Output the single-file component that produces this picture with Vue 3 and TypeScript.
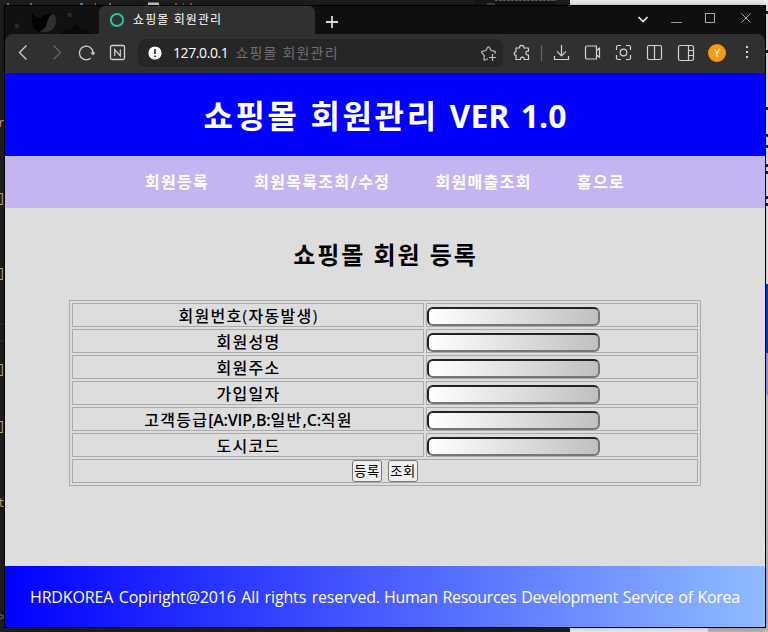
<script setup lang="ts">
import { ref } from 'vue'

interface Field { id: string; label: string }
interface Glyph { ch: string; y: number; color: string }
interface Part { text: string; latin: boolean }

const menu: string[] = ['회원등록', '회원목록조회/수정', '회원매출조회', '홈으로']
const fields: Field[] = [
  { id: 'custno', label: '회원번호(자동발생)' },
  { id: 'custname', label: '회원성명' },
  { id: 'address', label: '회원주소' },
  { id: 'joindate', label: '가입일자' },
  { id: 'grade', label: '고객등급[A:VIP,B:일반,C:직원' },
  { id: 'city', label: '도시코드' },
]
const values = ref<Record<string, string>>({})

// Latin runs are set tighter and heavier than the Hangul around them.
function parts(label: string): Part[] {
  if (!/[A-Z]/.test(label)) return [{ text: label, latin: false }]
  return (label.match(/[가-힣]+|[^가-힣]+/g) ?? []).map(text => ({ text, latin: !/[가-힣]/.test(text) }))
}

const code: Glyph[] = [
  { ch: 'r', y: 115, color: '#c9a37a' },
  { ch: ']', y: 190, color: '#c4b189' },
  { ch: ']', y: 265, color: '#c4b189' },
  { ch: ']', y: 361, color: '#c4b189' },
  { ch: ']', y: 418, color: '#c4b189' },
  { ch: 't', y: 495, color: '#d09a62' },
  { ch: '>', y: 609, color: '#6d7478' },
]
const marks: number[] = [11, 50, 107, 134, 145, 164, 171, 196, 203]
</script>

<template>
  <div class="desktop">
    <div class="backdrop">
      <div class="editor"></div>
      <div class="paper"></div>
      <div class="behind-blue"></div>
      <div class="behind-violet"></div>
      <div class="behind-gray"></div>
      <span v-for="g in code" :key="g.y" class="code" :style="{ top: g.y + 'px', color: g.color }">{{ g.ch }}</span>
      <i v-for="m in marks" :key="m" class="mark" :style="{ top: m + 'px' }"></i>
      <svg class="specks" width="570" height="5" viewBox="0 0 570 5">
        <path d="M7 4h2M30 4h2M109 4h2" stroke="#4d86a8" stroke-width="2" />
        <path d="M80 4h3M95 4h1" stroke="#4d86c8" stroke-width="2" />
        <path d="M148 4h11" stroke="#d0d0d0" stroke-width="3" />
        <path d="M175 4h2M183 4h1M190 4h2" stroke="#a5503c" stroke-width="2" />
        <path d="M475 0h81v5h-81z" fill="#171717" />
        <path d="M495 .5h61" stroke="#5a6158" stroke-dasharray="3 1" />
        <path d="M487 4h8" stroke="#34495a" stroke-width="2" />
      </svg>
    </div>

    <div class="window">
      <div class="tabs">
        <svg class="theme-art" width="94" height="28" viewBox="0 0 94 28">
          <rect width="94" height="28" fill="#111" />
          <path d="M27 7q3 5 9 5q4-4 12-4q-4 4-5 9q-2 8-9 9q-6-2-6-8q-2-3-1-11z" fill="#020202" />
          <path d="M48 8q4 2 3 9q-2 7-8 9q-5 1-8-1q6-2 7-8q1-7 6-9z" fill="#2f2f2f" />
          <circle cx="64.700" cy="9" r="2.200" fill="#2b2b2b" />
          <circle cx="11.700" cy="20" r="2.200" fill="#2b2b2b" />
          <path d="M55 28l6-5 3 1 7-6 7 6 3-1 5 5z" fill="#090909" />
        </svg>
        <div class="tab">
          <svg width="16" height="16" viewBox="0 0 16 16"><circle cx="8" cy="8" r="6.100" fill="none" stroke="#20c9a6" stroke-width="2" /></svg>
          <span>쇼핑몰 회원관리</span>
        </div>
        <svg class="plus" width="12" height="12" viewBox="0 0 12 12"><path d="M6 0v12M0 6h12" stroke="#d8d8d8" stroke-width="1.800" /></svg>
        <svg class="controls" width="122" height="16" viewBox="0 0 122 16" fill="none">
          <path d="M6.500 7l4.500 4.500L15.500 7" stroke="#e6e6e6" stroke-width="1.700" />
          <path d="M39 12.500h11" stroke="#999" />
          <rect x="73.500" y="3.500" width="9" height="9" stroke="#aaa" />
          <path d="M109.500 3.500l9 9M118.500 3.500l-9 9" stroke="#aaa" />
        </svg>
      </div>

      <div class="toolbar">
        <svg class="nav-icons" width="133" height="28" viewBox="0 0 133 28" fill="none" stroke="#d3d3d3" stroke-width="1.300">
          <path d="M21.500 6.500L14.500 13.500l7 7" />
          <path d="M48.500 6.500l7 7-7 7" stroke="#666" />
          <path d="M85.600 19.200A6.800 6.800 0 1 1 88 13.800" />
          <path d="M85.300 13.500h5.200l-2.500 2.800z" fill="#d3d3d3" stroke="none" />
          <rect x="105.500" y="6.500" width="14" height="14" rx="1.500" />
          <path d="M109.700 17v-6.500l5.600 6.500v-6.500" stroke-width="1.200" />
        </svg>
        <div class="address">
          <svg width="14" height="14" viewBox="0 0 14 14"><circle cx="7" cy="7" r="6.600" fill="#fff" /><path d="M7 3v5M7 9.500v1.600" stroke="#222" stroke-width="1.600" /></svg>
          <span class="host">127.0.0.1</span>
          <span class="page-name">쇼핑몰 회원관리</span>
          <svg class="star" width="18" height="18" viewBox="0 0 18 18" fill="none" stroke="#bdbdbd" stroke-width="1.200" stroke-linejoin="round">
            <path d="M8 14.800l-3.500 1.400q-.6 0-.5-.8l.3-3.500L1.800 8.600q-.5-1 .5-1.300l3.600-.8 1.800-3.200q.8-1 1.600 0l1.800 3.200 3.600.8q1 .3.500 1.300l-.8 1" />
            <path d="M12.500 10v7M9 13.500h7" />
          </svg>
        </div>
        <svg class="actions" width="262" height="28" viewBox="503 39 262 28" fill="none" stroke="#d3d3d3" stroke-width="1.200">
          <path d="M516 48h3.500v-.5a2.200 2.200 0 0 1 4.400 0v.5h4.600v3.200q-2.600-.4-2.600 1.800t2.600 2v4.500h-4.200q.2-2.300-1.900-2.300t-2 2.300H516v-4.300q-1.800.2-1.800-1.700t1.800-1.700z" stroke-linejoin="round" />
          <path d="M541.500 45v16" stroke="#666" />
          <path d="M561.500 45v10.500M557 51.300l4.500 4.500 4.500-4.500M554.500 56v3.500h14V56" />
          <path d="M585.500 47.500a1.500 1.500 0 0 1 1.500-1.500h9.500v13H587a1.500 1.500 0 0 1-1.500-1.500zM596.500 50.500l3-2.300v9l-3-2.300" />
          <path d="M616.500 50v-3a1.500 1.500 0 0 1 1.500-1.500h3M626 45.500h3a1.500 1.500 0 0 1 1.500 1.500v3M630.500 55v3a1.500 1.500 0 0 1-1.500 1.500h-3M621 59.500h-3a1.500 1.500 0 0 1-1.500-1.500v-3" />
          <circle cx="623.500" cy="52.500" r="3.300" />
          <rect x="647.500" y="45.500" width="14" height="14" rx="1.800" /><path d="M654.500 45.500v14" />
          <rect x="678.500" y="45.500" width="15" height="15" rx="1.800" /><path d="M688.500 45.500v15M688.500 50.500h5M688.500 55.500h5" />
          <circle cx="717" cy="53" r="9" fill="#f39c12" stroke="none" />
          <path d="M746 46h2v2h-2zM746 51h2v2h-2zM746 56h2v2h-2z" fill="#d3d3d3" stroke="none" />
          <text x="717" y="56.700" text-anchor="middle" fill="#fff" stroke="none" font-size="10" font-family="Open Sans, sans-serif">Y</text>
        </svg>
      </div>

      <div class="site">
        <header><h1>쇼핑몰 회원관리 <span class="version">VER 1.0</span></h1></header>
        <nav><a v-for="item in menu" :key="item">{{ item }}</a></nav>
        <main>
          <h2>쇼핑몰 회원 등록</h2>
          <table>
            <colgroup><col class="label-col"><col></colgroup>
            <tbody>
              <tr v-for="f in fields" :key="f.id">
                <th><span v-for="(p, i) in parts(f.label)" :key="i" :class="{ latin: p.latin }">{{ p.text }}</span></th>
                <td><input v-model="values[f.id]" type="text"></td>
              </tr>
              <tr><td colspan="2"><div class="buttons"><button type="button">등록</button><button type="button">조회</button></div></td></tr>
            </tbody>
          </table>
        </main>
        <footer><span class="rights">HRDKOREA Copiright@2016 All rights reserved.</span> <span class="owner">Human Resources Development Service of Korea</span></footer>
      </div>
    </div>
  </div>
</template>

<style>
body { margin: 0; overflow: hidden; }
</style>

<style scoped>
* { box-sizing: border-box; }
.desktop {
  position: relative; width: 768px; height: 632px; padding: 5px 0 0 4px; overflow: hidden;
  font-family: "Open Sans", "Noto Sans CJK KR", sans-serif; background: #1e1e1e;
}
.backdrop { position: absolute; inset: 0; }
.backdrop > * { position: absolute; }
.editor { inset: 0; background: linear-gradient(#1e1e1e 323px, #292929 323px 325px, #1e1e1e 325px 340px, #292929 340px 342px, #1e1e1e 342px); }
.paper { left: 570px; top: 0; width: 198px; height: 632px; background: #f1f1f1; }
.behind-blue { left: 760px; top: 284px; width: 8px; height: 69px; background: #0638dc; }
.behind-violet { left: 760px; top: 353px; width: 8px; height: 42px; background: #aa9be0; }
.behind-gray { left: 708px; top: 395px; width: 60px; height: 237px; background: linear-gradient(#ccc 84px, #bbb); }
.code { left: -2px; font: 12px/18px "Liberation Mono", monospace; }
.mark { left: 766px; width: 2px; height: 3px; background: #222; }
.specks { left: 0; top: 0; }
.window {
  position: relative; width: 762px; height: 623px; border: 1px solid #000;
  background: #0f0f0f; box-shadow: 0 0 7px rgba(0, 0, 0, .3);
}
.tabs { display: flex; height: 28px; align-items: center; }
.theme-art { flex: none; }
.tab {
  display: flex; align-items: center; gap: 8px; width: 216px; height: 28px; padding: 0 0 0 10px;
  border-radius: 6px 6px 0 0; background: #303030; color: #fff; font-size: 12px; line-height: 18px; letter-spacing: 1.100px;
}
.plus { margin: 4px 0 0 11px; }
.controls { margin: -4px 11px 0 auto; }
.toolbar { display: flex; height: 39px; padding-top: 5px; border-radius: 8px 8px 0 0; background: #303030; }
.toolbar > svg { flex: none; }
.address {
  display: flex; align-items: center; width: 365px; height: 28px; padding: 0 5px 0 10px;
  border-radius: 7px; background: #262626; font-size: 14px; line-height: 20px;
}
.host { margin-left: 11px; color: #fff; letter-spacing: -.400px; }
.page-name { margin-left: 7px; color: #6f6f6f; letter-spacing: 1.180px; }
.star { margin-left: auto; }
.site { display: grid; grid-template-rows: 83px 52px 358px 61px; height: 554px; }
header { display: flex; justify-content: center; background: #00f; color: #fff; }
h1 { margin: 0; font-size: 32px; line-height: 86px; letter-spacing: 2.600px; white-space: nowrap; }
.version { letter-spacing: 0; word-spacing: 3px; }
nav {
  display: flex; gap: 45.200px; padding-left: 140px; background: #c5b4f2; color: #fff;
  font-size: 16px; font-weight: 700; line-height: 52px; letter-spacing: 1.300px; white-space: nowrap;
}
main { padding-top: 25px; background: #ddd; }
h2 { margin: 0 0 23px; padding-left: 1px; color: #000; font-size: 24px; line-height: 44px; text-align: center; letter-spacing: 1.920px; }
table {
  width: 632px; height: 186px; margin: 0 64px; table-layout: fixed; border: 1px solid #aaa;
  border-spacing: 2px; color: #000; font-size: 16px;
}
.label-col { width: 352px; }
tr { height: 24px; }
th, td { height: 24px; padding: 0; border: 1px solid #aaa; }
th { padding: 2px 0 0 1px; font-weight: 500; line-height: 20px; letter-spacing: 1.280px; white-space: nowrap; }
.latin { font-weight: 600; letter-spacing: -.200px; }
input {
  display: block; width: 173px; height: 19px; margin-top: 3px; padding: 1px 2px;
  border: 2px solid; border-color: #222 #767676 #767676 #222; border-radius: 6px;
  background: linear-gradient(to right, #fff, #c0c0c0); outline: none;
}
.buttons { display: flex; justify-content: center; gap: 6px; height: 22px; }
button {
  width: 30px; height: 22px; padding: 0; border: 1px solid #767676; border-radius: 3px; background: #efefef;
  color: #000; font: 13.333px/20px "Noto Sans CJK KR", sans-serif; letter-spacing: .500px; white-space: nowrap;
}
footer {
  padding-left: 25px; background: linear-gradient(to right, #00f, #90bcff); color: #fff;
  font-size: 16px; line-height: 62px; white-space: nowrap;
}
.rights { letter-spacing: -.150px; word-spacing: 1.500px; }
.owner { letter-spacing: -.320px; word-spacing: 1px; }
</style>
